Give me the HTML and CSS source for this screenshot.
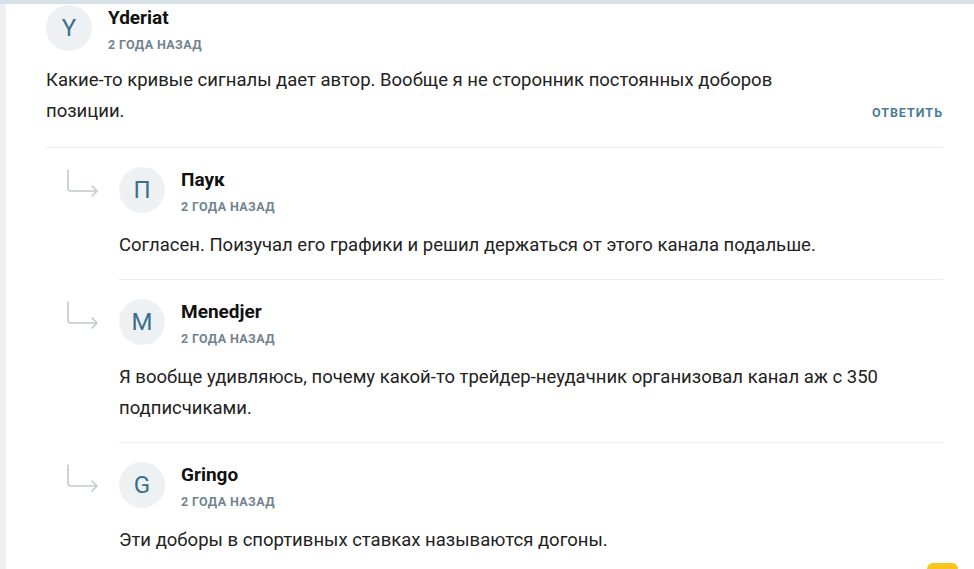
FILE: index.html
```html
<!DOCTYPE html>
<html lang="ru">
<head>
  <meta charset="UTF-8" />
  <title>Комментарии</title>
  <link rel="stylesheet" href="styles.css">
</head>
<body>
  <div class="page">
    <div class="comments">
      <div class="comment">
        <div class="head">
          <div class="avatar">Y</div>
          <div class="meta">
            <div class="name">Yderiat</div>
            <div class="date">2 года назад</div>
          </div>
        </div>
        <div class="body-row">
          <p class="text">Какие-то кривые сигналы дает автор. Вообще я не сторонник постоянных доборов позиции.</p>
          <button class="reply-btn">Ответить</button>
        </div>
      </div>

      <div class="replies">
        <div class="reply">
          <svg class="arrow" width="34" height="30" viewBox="0 0 34 30">
            <path d="M2 1 V19 Q2 22 5 22 H31 M26 17 L31 22 L26 27" fill="none" stroke="#c3c9ce" stroke-width="1.6" stroke-linecap="round" stroke-linejoin="round"/>
          </svg>
          <div class="reply-main">
            <div class="head">
              <div class="avatar">П</div>
              <div class="meta">
                <div class="name">Паук</div>
                <div class="date">2 года назад</div>
              </div>
            </div>
            <p class="text">Согласен. Поизучал его графики и решил держаться от этого канала подальше.</p>
          </div>
        </div>

        <div class="reply">
          <svg class="arrow" width="34" height="30" viewBox="0 0 34 30">
            <path d="M2 1 V19 Q2 22 5 22 H31 M26 17 L31 22 L26 27" fill="none" stroke="#c3c9ce" stroke-width="1.6" stroke-linecap="round" stroke-linejoin="round"/>
          </svg>
          <div class="reply-main">
            <div class="head">
              <div class="avatar">M</div>
              <div class="meta">
                <div class="name">Menedjer</div>
                <div class="date">2 года назад</div>
              </div>
            </div>
            <p class="text">Я вообще удивляюсь, почему какой-то трейдер-неудачник организовал канал аж с 350 подписчиками.</p>
          </div>
        </div>

        <div class="reply">
          <svg class="arrow" width="34" height="30" viewBox="0 0 34 30">
            <path d="M2 1 V19 Q2 22 5 22 H31 M26 17 L31 22 L26 27" fill="none" stroke="#c3c9ce" stroke-width="1.6" stroke-linecap="round" stroke-linejoin="round"/>
          </svg>
          <div class="reply-main">
            <div class="head">
              <div class="avatar">G</div>
              <div class="meta">
                <div class="name">Gringo</div>
                <div class="date">2 года назад</div>
              </div>
            </div>
            <p class="text">Эти доборы в спортивных ставках называются догоны.</p>
          </div>
        </div>
      </div>
    </div>
  </div>
  <div class="float-tab"></div>
</body>
</html>
```

FILE: styles.css
```css
* {
  box-sizing: border-box;
}
html, body {
  margin: 0;
  padding: 0;
  height: 100%;
  overflow: hidden;
}
body {
  font-family: Roboto, "Liberation Sans", sans-serif;
  background: #fff;
  color: #222;
  border-top: 4px solid #d8e0e8;
}
.page {
  min-height: 100%;
  border-left: 6px solid #eef1f3;
  padding: 1px 31px 0 40px;
}
.head {
  display: flex;
  align-items: flex-start;
}
.avatar {
  width: 46px;
  height: 46px;
  border-radius: 50%;
  background: #eef1f4;
  color: #3a6f8c;
  font-size: 24px;
  display: flex;
  align-items: center;
  justify-content: center;
  flex-shrink: 0;
}
.meta {
  margin-left: 16px;
  padding-top: 1px;
}
.name {
  font-size: 19px;
  font-weight: bold;
  color: #111;
  line-height: 24px;
}
.date {
  font-size: 12.5px;
  font-weight: bold;
  color: #73838f;
  text-transform: uppercase;
  letter-spacing: 0.4px;
  line-height: 18px;
  margin-top: 6px;
}
.text {
  margin: 14px 0 0;
  font-size: 18.5px;
  line-height: 31px;
  color: #222;
}
.body-row {
  display: flex;
  align-items: flex-end;
  gap: 70px;
}
.body-row .text {
  flex: 1;
  margin-top: 11px;
}
.reply-btn {
  border: none;
  background: none;
  padding: 0;
  margin-bottom: 7px;
  font-family: inherit;
  font-size: 12.5px;
  font-weight: bold;
  text-transform: uppercase;
  letter-spacing: 1px;
  color: #4b7d99;
}
.comment {
  padding-bottom: 20px;
  border-bottom: 1px solid #ececec;
}
.reply {
  display: flex;
}
.arrow {
  flex-shrink: 0;
  margin: 21px 19px 0 20px;
}
.reply-main {
  flex: 1;
  padding: 19px 0 18px;
  border-bottom: 1px solid #ececec;
}
.float-tab {
  position: fixed;
  right: 16px;
  bottom: 0;
  width: 31px;
  height: 6px;
  background: #f7c51c;
  border-radius: 6px 6px 0 0;
}
```
